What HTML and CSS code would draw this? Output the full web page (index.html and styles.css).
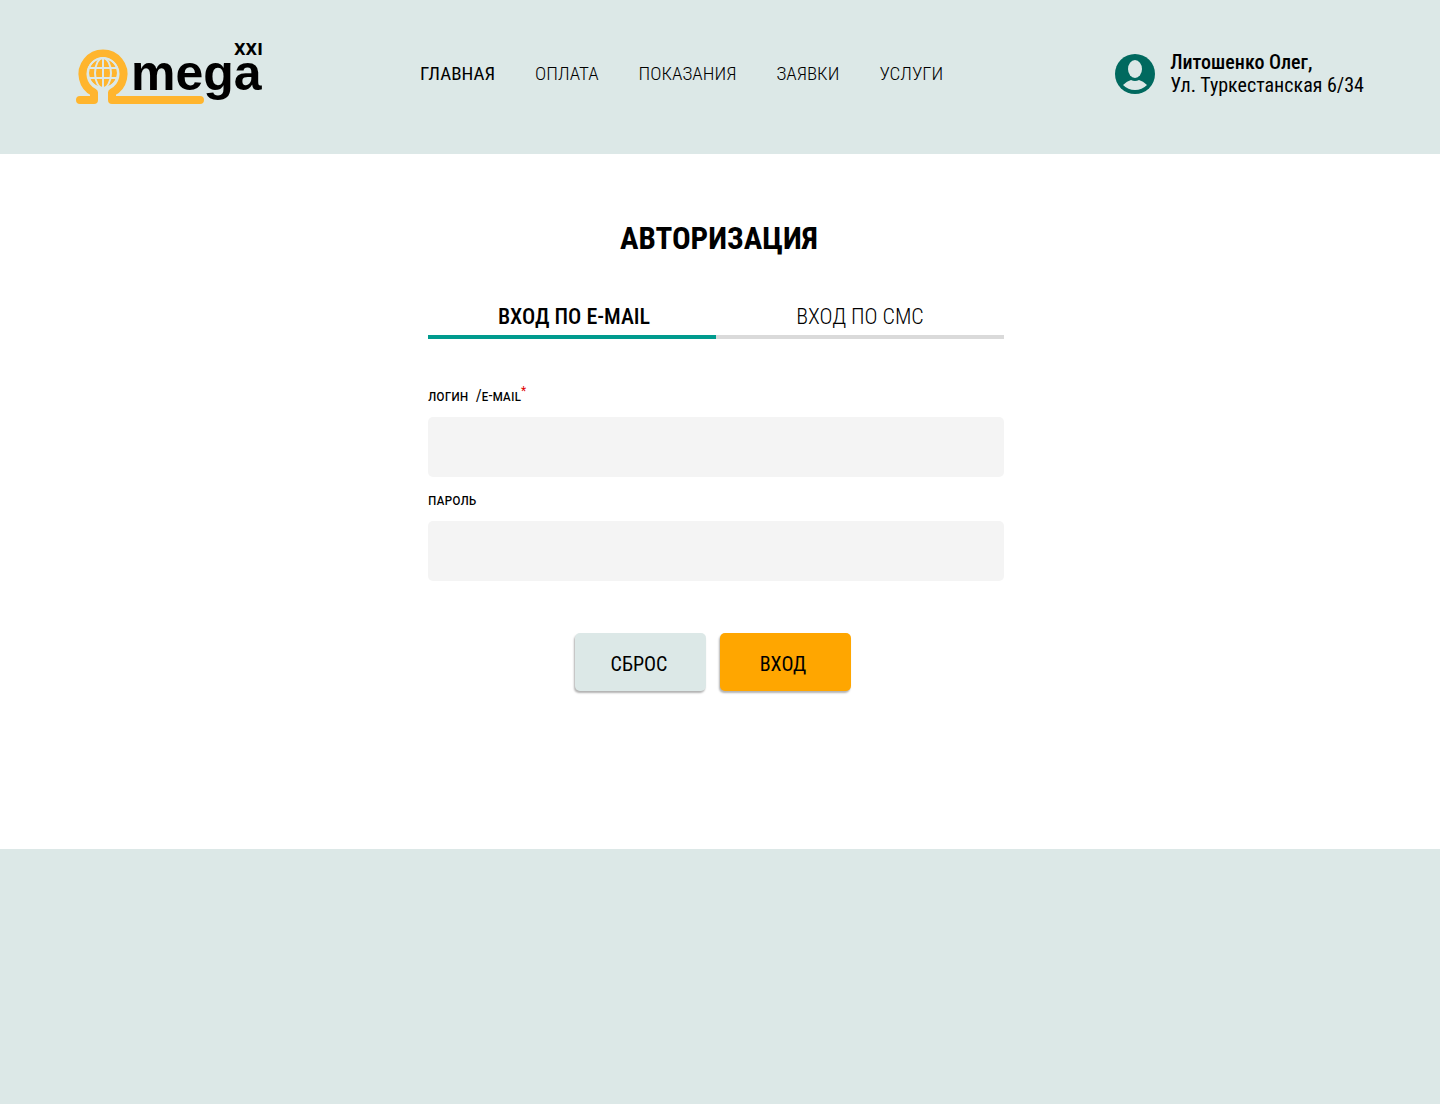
FILE: index.html
```html
<!DOCTYPE html>
<html lang="ru">
<head>
<meta charset="utf-8">
<meta name="viewport" content="width=device-width, initial-scale=1">
<title>Омега XXI — Авторизация</title>
<link rel="stylesheet" href="styles.css">
</head>
<body>
<header class="header">
  <a class="logo" href="#" aria-label="Omega XXI">
    <svg width="190" height="64" viewBox="0 0 190 64">
      <g fill="none" stroke="#ffb52e" stroke-width="8" stroke-linecap="round" stroke-linejoin="round">
        <path d="M4 58H18V50.500A20.500 20.500 0 1 1 36 50.500V58H124"/>
      </g>
      <circle cx="27" cy="31" r="14" fill="#ffb52e"/>
      <g fill="none" stroke="#dce8e7" stroke-width="2">
        <circle cx="27" cy="31" r="15"/>
        <ellipse cx="27" cy="31" rx="8" ry="15"/>
        <path d="M27 16V46M13 26H41M13 36H41"/>
      </g>
      <text class="logo-word" x="55" y="48">mega</text>
      <text class="logo-number" x="158" y="13">XXI</text>
    </svg>
  </a>
  <nav class="nav">
    <a class="nav-link nav-link-active" href="#">ГЛАВНАЯ</a>
    <a class="nav-link" href="#">ОПЛАТА</a>
    <a class="nav-link" href="#">ПОКАЗАНИЯ</a>
    <a class="nav-link" href="#">ЗАЯВКИ</a>
    <a class="nav-link" href="#">УСЛУГИ</a>
  </nav>
  <div class="user">
    <svg class="avatar" width="40" height="40" viewBox="0 0 40 40" aria-hidden="true">
      <circle cx="20" cy="20" r="20" fill="#00695f"/>
      <ellipse cx="20" cy="15" rx="7" ry="9" fill="#dce8e7"/>
      <path d="M8 31Q12 27 16 26Q20 28 24 26Q28 27 32 31Q27 36 20 36Q13 36 8 31Z" fill="#dce8e7"/>
    </svg>
    <div class="user-text"><strong class="user-name">Литошенко Олег,</strong><span>Ул. Туркестанская 6/34</span></div>
  </div>
</header>
<main class="main">
  <h1 class="title">АВТОРИЗАЦИЯ</h1>
  <form class="form">
    <div class="tabs" role="tablist">
      <button class="tab tab-active" type="button" role="tab" aria-selected="true">ВХОД ПО E-MAIL</button>
      <button class="tab" type="button" role="tab" aria-selected="false">ВХОД ПО СМС</button>
    </div>
    <div class="field">
      <label class="label" for="login">логин&nbsp; /e-mail<span class="required">*</span></label>
      <input class="input" id="login" type="text">
    </div>
    <div class="field">
      <label class="label" for="password">пароль</label>
      <input class="input" id="password" type="password">
    </div>
    <div class="actions">
      <button class="button" type="reset">СБРОС</button>
      <button class="button button-primary" type="submit">ВХОД</button>
    </div>
  </form>
</main>
<footer class="footer"></footer>
</body>
</html>
```
FILE: styles.css
```css
*,
*::before,
*::after {
  box-sizing: border-box;
}

body {
  display: flex;
  flex-direction: column;
  min-height: 100vh;
  margin: 0;
  background: #fff;
  color: #000;
  font-family: "Roboto Condensed", Roboto, sans-serif;
  font-size: 20px;
  line-height: 24px;
}

button,
input {
  margin: 0;
  border: 0;
  color: inherit;
  font: inherit;
}

a {
  color: inherit;
  text-decoration: none;
}

.header {
  display: flex;
  align-items: flex-start;
  justify-content: space-between;
  padding: 42px 76px 48px;
  background: #dce8e7;
}

.logo svg,
.avatar {
  display: block;
  overflow: visible;
}

.logo-word {
  font: bold 50px "Liberation Sans", sans-serif;
}

.logo-number {
  font: bold 15px "DejaVu Sans", sans-serif;
}

.nav {
  display: flex;
  gap: 40px;
  margin-right: 18px;
  padding-top: 20px;
  font-size: 19px;
}

.nav-link {
  font-weight: 300;
}

.nav-link-active {
  font-weight: 400;
}

.user {
  display: flex;
  gap: 15px;
  align-items: center;
  padding-top: 9px;
}

.user-text {
  display: flex;
  flex-direction: column;
  line-height: 23px;
}

.user-name {
  font-weight: 500;
}

.main {
  padding: 65px 8px 158px 0;
}

.title {
  margin: 0 0 43px 6px;
  font-size: 31px;
  font-weight: 700;
  line-height: 40px;
  text-align: center;
}

.form {
  width: 100%;
  max-width: 576px;
  margin: 0 auto;
}

.tabs {
  display: grid;
  grid-template-columns: 1fr 1fr;
  margin-bottom: 40px;
}

.tab {
  padding: 1px 0 4px;
  border-bottom: 4px solid #dadada;
  background: none;
  font-size: 22px;
  font-weight: 300;
  line-height: 28px;
}

.tab-active {
  border-color: #009b8e;
  padding-left: 4px;
  font-weight: 500;
}

.field {
  margin-bottom: 6px;
}

.label {
  display: block;
  padding: 5px 0 9px;
  font-size: 16px;
  font-variant: small-caps;
}

.required {
  color: #e00000;
  font-size: 12px;
  line-height: 0;
  vertical-align: super;
}

.input {
  display: block;
  width: 100%;
  height: 60px;
  padding: 0 16px;
  border-radius: 5px;
  background: #f4f4f4;
}

.actions {
  display: flex;
  gap: 14px;
  justify-content: center;
  padding: 46px 6px 0 0;
}

.button {
  width: 131px;
  height: 58px;
  padding: 4px 3px 0 0;
  border-radius: 5px;
  background: #dce8e7;
  box-shadow: -1px 2px 2px rgba(0, 0, 0, 0.3);
}

.button-primary {
  padding-right: 5px;
  background: #ffa600;
}

.footer {
  flex: 1;
  min-height: 255px;
  background: #dce8e7;
}
```
